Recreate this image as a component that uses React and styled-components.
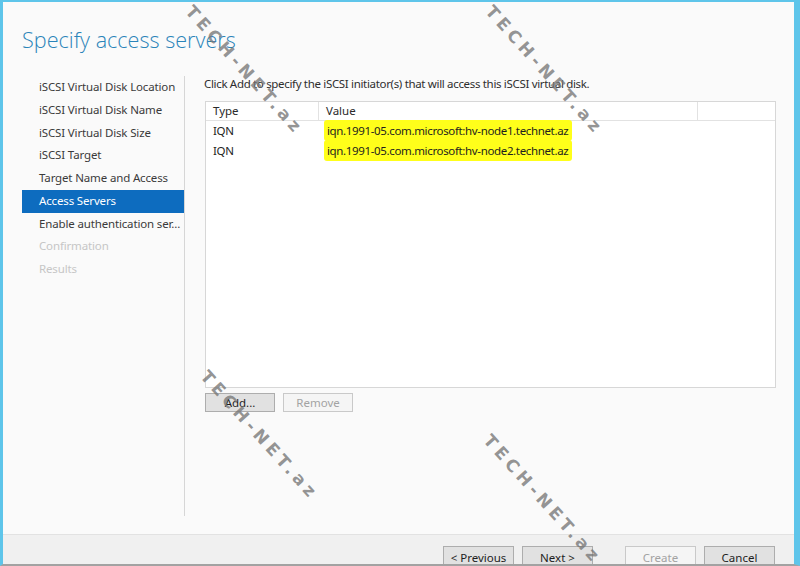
import React from "react";
import styled, { createGlobalStyle } from "styled-components";

const GlobalStyle = createGlobalStyle`
  html, body { margin: 0; padding: 0; }
  body {
    width: 800px;
    height: 566px;
    overflow: hidden;
    background: #ffffff;
    font-family: "Noto Sans", "Open Sans", sans-serif;
  }
`;

const Window = styled.div`
  position: relative;
  box-sizing: border-box;
  width: 800px;
  height: 566px;
  display: flex;
  flex-direction: column;
  background: #fafafa;
  border-left: 3px solid #5ec5ea;
  border-top: 2px solid #5ec5ea;
  border-right: 6px solid #5ec5ea;
  border-bottom: 2px solid #a2a2a2;
  overflow: hidden;
`;

const Main = styled.div`
  flex: 1;
  display: flex;
  flex-direction: column;
  padding-left: 19px;
`;

const Title = styled.h1`
  margin: 24px 0 0 0;
  font-family: "Open Sans", "Noto Sans", sans-serif;
  font-weight: 300;
  font-size: 21.6px;
  line-height: 28px;
  color: #2a84b9;
`;

const Body = styled.div`
  display: flex;
  margin-top: 22px;
  height: 440px;
`;

const Nav = styled.div`
  box-sizing: border-box;
  width: 163px;
  border-right: 1px solid #d6d6d6;
  display: flex;
  flex-direction: column;
`;

const NavItem = styled.div`
  height: 22.75px;
  line-height: 22.75px;
  padding-left: 17px;
  font-size: 11.5px;
  letter-spacing: -0.15px;
  white-space: nowrap;
  overflow: hidden;
  color: ${(p) => (p.$selected ? "#ffffff" : p.$disabled ? "#c6c6c6" : "#3a3a3a")};
  background: ${(p) => (p.$selected ? "#0d6cbf" : "transparent")};
`;

const Content = styled.div`
  flex: 1;
  display: flex;
  flex-direction: column;
  padding-left: 19px;
  padding-right: 18px;
`;

const Instruction = styled.div`
  font-size: 11.5px;
  letter-spacing: -0.33px;
  line-height: 16px;
  color: #2e2e2e;
  white-space: nowrap;
`;

const Table = styled.div`
  box-sizing: border-box;
  margin-top: 9px;
  margin-left: 1px;
  height: 287px;
  border: 1px solid #d7d7d7;
  background: #ffffff;
  display: flex;
  flex-direction: column;
`;

const Grid = styled.div`
  display: grid;
  grid-template-columns: 113px 379px 1fr;
`;

const HeadCell = styled.div`
  height: 18px;
  line-height: 18px;
  font-size: 11.5px;
  color: #2a2a2a;
  padding-left: ${(p) => p.$pad}px;
  border-bottom: 1px solid #e2e2e2;
  border-right: ${(p) => (p.$last ? "none" : "1px solid #e2e2e2")};
`;

const Cell = styled.div`
  height: 20px;
  line-height: 20px;
  font-size: 11.5px;
  letter-spacing: -0.35px;
  color: #1e1e1e;
  padding-left: ${(p) => p.$pad}px;
  white-space: nowrap;
`;

const Mark = styled.span`
  background: #ffff1a;
  padding: 3px 4px 3px 3px;
  margin-left: -3px;
  border-radius: 3px;
`;

const ButtonRow = styled.div`
  display: flex;
  gap: 8px;
  margin-top: 5px;
  margin-left: 1px;
`;

const Button = styled.button`
  box-sizing: border-box;
  width: ${(p) => p.$w || 71}px;
  height: ${(p) => p.$h || 19}px;
  padding: 0;
  font-family: "Noto Sans", "Open Sans", sans-serif;
  font-size: 11.5px;
  color: ${(p) => (p.disabled ? "#a3a3a3" : "#1e1e1e")};
  background: ${(p) => (p.disabled ? "#f5f5f5" : "#e1e1e1")};
  border: 1px solid ${(p) => (p.disabled ? "#c9c9c9" : "#adadad")};
  border-radius: 0;
  line-height: 1;
`;

const Footer = styled.div`
  box-sizing: border-box;
  height: 30px;
  border-top: 1px solid #e2e2e2;
  background: #f0f0f0;
  display: flex;
  justify-content: flex-end;
  align-items: flex-start;
  padding: 11px 19px 0 0;
  overflow: hidden;
`;

const FooterGap = styled.div`
  width: ${(p) => p.$w}px;
`;

const Watermark = styled.div`
  position: absolute;
  left: ${(p) => p.$x}px;
  top: ${(p) => p.$y}px;
  transform: rotate(48deg);
  transform-origin: 0 50%;
  font-family: "DejaVu Sans", sans-serif;
  font-weight: bold;
  font-size: 17px;
  letter-spacing: 4.3px;
  color: rgba(120, 120, 120, 0.8);
  white-space: nowrap;
  pointer-events: none;
`;

const navItems = [
  { label: "iSCSI Virtual Disk Location" },
  { label: "iSCSI Virtual Disk Name" },
  { label: "iSCSI Virtual Disk Size" },
  { label: "iSCSI Target" },
  { label: "Target Name and Access" },
  { label: "Access Servers", selected: true },
  { label: "Enable authentication ser..." },
  { label: "Confirmation", disabled: true },
  { label: "Results", disabled: true },
];

const rows = [
  { type: "IQN", value: "iqn.1991-05.com.microsoft:hv-node1.technet.az" },
  { type: "IQN", value: "iqn.1991-05.com.microsoft:hv-node2.technet.az" },
];

const marks = [
  { x: 186, y: -4 },
  { x: 486, y: -4 },
  { x: 201, y: 361 },
  { x: 484, y: 425 },
];

export default function App() {
  return (
    <>
      <GlobalStyle />
      <Window>
        <Main>
          <Title>Specify access servers</Title>
          <Body>
            <Nav>
              {navItems.map((it) => (
                <NavItem key={it.label} $selected={it.selected} $disabled={it.disabled}>
                  {it.label}
                </NavItem>
              ))}
            </Nav>
            <Content>
              <Instruction>
                Click Add to specify the iSCSI initiator(s) that will access this iSCSI virtual disk.
              </Instruction>
              <Table>
                <Grid>
                  <HeadCell $pad={7}>Type</HeadCell>
                  <HeadCell $pad={7}>Value</HeadCell>
                  <HeadCell $pad={7} $last />
                  {rows.map((r) => (
                    <React.Fragment key={r.value}>
                      <Cell $pad={7}>{r.type}</Cell>
                      <Cell $pad={8}>
                        <Mark>{r.value}</Mark>
                      </Cell>
                      <Cell $pad={7} />
                    </React.Fragment>
                  ))}
                </Grid>
              </Table>
              <ButtonRow>
                <Button $w={70}>Add...</Button>
                <Button $w={70} disabled>
                  Remove
                </Button>
              </ButtonRow>
            </Content>
          </Body>
        </Main>
        <Footer>
          <Button $h={23}>&lt; Previous</Button>
          <FooterGap $w={8} />
          <Button $h={23}>Next &gt;</Button>
          <FooterGap $w={32} />
          <Button $h={23} disabled>
            Create
          </Button>
          <FooterGap $w={8} />
          <Button $h={23}>Cancel</Button>
        </Footer>
        {marks.map((m, i) => (
          <Watermark key={i} $x={m.x} $y={m.y}>
            TECH-NET.az
          </Watermark>
        ))}
      </Window>
    </>
  );
}
